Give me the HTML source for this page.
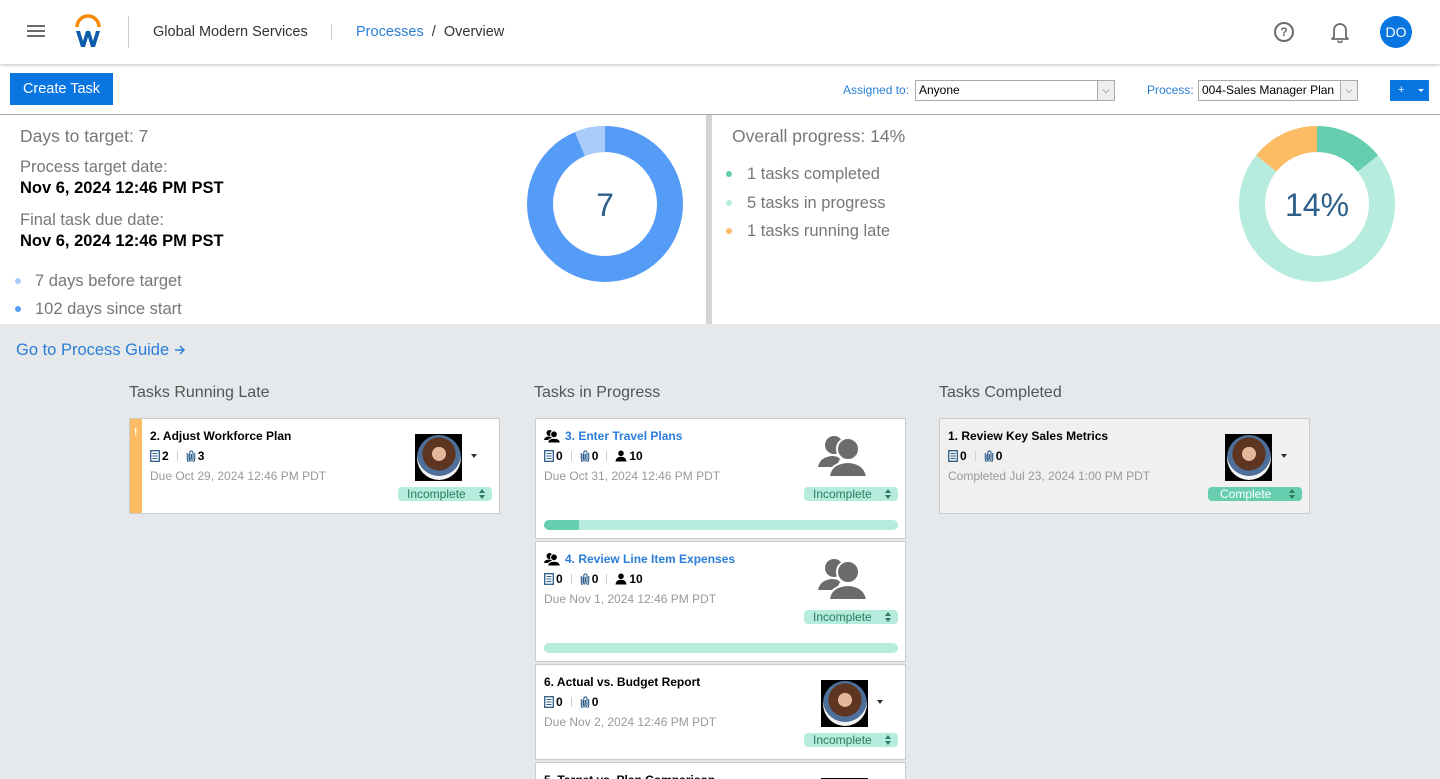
<!DOCTYPE html>
<html><head><meta charset="utf-8"><style>
*{box-sizing:border-box;margin:0;padding:0}
html{width:1440px;height:779px;overflow:hidden}
body{width:1440px;height:779px;overflow:hidden;background:#e6e9ec;font-family:"Liberation Sans",Roboto,sans-serif;position:relative;color:#333}
.abs{position:absolute}
.hdr{left:0;top:0;width:1440px;height:64px;background:#fff;box-shadow:0 1px 3px rgba(0,0,0,.25);z-index:2}
.tb{left:0;top:64px;width:1440px;height:51px;background:#fff;border-bottom:1px solid #a8a8a8}
.panel{top:115px;height:209px;background:#fff}
.card{position:absolute;background:#fff;border:1px solid #ccc;width:371px;overflow:hidden}
.card .t{position:absolute;left:14px;top:10px;font-size:12px;font-weight:bold;color:#000;display:flex;align-items:center;gap:5px}
.card .m{position:absolute;left:14px;top:30px;font-size:12px;font-weight:bold;color:#000;display:flex;align-items:center;gap:2px}
.card .d{position:absolute;left:14px;top:50px;font-size:12px;color:#999}
.sep{width:1px;height:10px;background:#ccc;margin:0 6px}
.av{position:absolute;left:285px;top:15px;width:47px;height:47px;background:#000}
.av::after{content:"";position:absolute;left:2px;top:1px;width:44px;height:45px;border-radius:50%;background:radial-gradient(circle at 50% 42%,#e2b79a 0 20%,#5d3520 21% 48%,#4d6f9a 49% 64%,#f4f4f4 65%)}
.car{position:absolute;left:341px;top:35px;width:0;height:0;border-left:3.5px solid transparent;border-right:3.5px solid transparent;border-top:4px solid #333}
.pill{position:absolute;left:268px;top:68px;width:94px;height:14px;border-radius:4px;background:#b5ecdd;color:#2d7a5f;font-size:12px;line-height:14px;padding-left:9px}
.pill::after{content:"";position:absolute;right:7px;top:2px;width:0;height:0;border-left:3.5px solid transparent;border-right:3.5px solid transparent;border-bottom:4px solid #2d7a5f}
.pill::before{content:"";position:absolute;right:7px;top:7.5px;width:0;height:0;border-left:3.5px solid transparent;border-right:3.5px solid transparent;border-top:4px solid #2d7a5f}
.bar{position:absolute;left:8px;top:101px;width:354px;height:10px;border-radius:5px;background:#b5ecdd;overflow:hidden}
.bar i{display:block;width:35px;height:10px;background:#66cdae}
.grp{position:absolute;left:282px;top:14px}
.colh{font-size:16px;color:#555;top:384px}
</style></head><body>
<svg width="0" height="0" style="position:absolute">
<defs>
<symbol id="doc" viewBox="0 0 10 12"><rect x="0.7" y="0.7" width="8.6" height="10.6" fill="none" stroke="#2c5f8a" stroke-width="1.3"/><path d="M2.5 3.5H7.5M2.5 6H7.5M2.5 8.5H7.5" stroke="#2c5f8a" stroke-width="1.1"/></symbol>
<symbol id="clip" viewBox="0 0 10 12"><path d="M3 4V9A2 2 0 0 0 7 9V2.5A1.6 1.6 0 0 0 3.8 2.5V8.5A.8.8 0 0 0 5.4 8.5V4" fill="none" stroke="#2c5f8a" stroke-width="1.1"/><path d="M1.3 3V9.2A3.7 3.7 0 0 0 8.7 9.2V3" fill="none" stroke="#2c5f8a" stroke-width="1.1"/></symbol>
<symbol id="per" viewBox="0 0 12 12"><circle cx="6" cy="3.3" r="2.8" fill="#000"/><path d="M0.5 11.5Q1 6.8 6 6.8Q11 6.8 11.5 11.5Z" fill="#000"/></symbol>
<symbol id="ppl" viewBox="0 0 16 14"><circle cx="5.5" cy="4" r="3" fill="#000"/><path d="M0 11Q0.5 7.5 5 7.5Q7 7.5 8 8.3L6 11Z" fill="#000"/><circle cx="10" cy="5.3" r="3.4" fill="#000" stroke="#fff" stroke-width="1"/><path d="M3.5 14Q4 9.3 10 9.3Q16 9.3 16.5 14Z" fill="#000" stroke="#fff" stroke-width="1"/></symbol>
</defs></svg>

<div class="abs hdr">
  <div class="abs" style="left:27px;top:25px;width:18px;height:2px;background:#6b6b6b;box-shadow:0 5px 0 #6b6b6b,0 10px 0 #6b6b6b"></div>
  <svg class="abs" style="left:74px;top:14px" width="28" height="36" viewBox="0 0 28 36">
    <path d="M3 13 A11 11 0 0 1 25 13" fill="none" stroke="#f38b00" stroke-width="3.5"/>
    <path d="M2 17 L7 33 L11 33 L14 23 L17 33 L21 33 L26 17 L22 17 L19 27 L16 17 L12 17 L9 27 L6 17 Z" fill="#0b5cad"/>
  </svg>
  <div class="abs" style="left:128px;top:16px;width:1px;height:32px;background:#ccc"></div>
  <div class="abs" style="left:153px;top:24px;font-size:14.5px;color:#333">Global Modern Services</div>
  <div class="abs" style="left:331px;top:24px;width:1px;height:16px;background:#ccc"></div>
  <div class="abs" style="left:356px;top:24px;font-size:14.5px;color:#333"><span style="color:#2a7ed8">Processes</span>&nbsp;&nbsp;/&nbsp;&nbsp;Overview</div>
  <div class="abs" style="left:1274px;top:22px;width:20px;height:20px;border:2px solid #6b6b6b;border-radius:50%;font-size:12px;font-weight:bold;color:#6b6b6b;text-align:center;line-height:16px">?</div>
  <svg class="abs" style="left:1330px;top:21px" width="20" height="22" viewBox="0 0 20 22"><path d="M4 16 V9 A6 6 0 0 1 16 9 V16 L18 18 H2 Z" fill="none" stroke="#6b6b6b" stroke-width="1.8" stroke-linejoin="round"/><path d="M8 19.5 A2 2 0 0 0 12 19.5" stroke="#6b6b6b" stroke-width="1.8" fill="none"/></svg>
  <div class="abs" style="left:1380px;top:16px;width:32px;height:32px;border-radius:50%;background:#0875e1;color:#fff;font-size:14px;text-align:center;line-height:32px">DO</div>
</div>

<div class="abs tb">
  <div class="abs" style="left:10px;top:9px;width:103px;height:32px;background:#0875e1;color:#fff;font-size:14.5px;text-align:center;line-height:32px">Create Task</div>
  <div class="abs" style="left:843px;top:19px;font-size:12px;color:#2a7ed8">Assigned to:</div>
  <div class="abs" style="left:915px;top:16px;width:200px;height:21px;border:1px solid #aaa;font-size:12px;color:#000;line-height:19px;padding-left:3px">Anyone<div class="abs" style="right:0;top:0;width:17px;height:19px;border-left:1px solid #aaa;background:#eee;font-size:9px;text-align:center;color:#444">&#9013;</div></div>
  <div class="abs" style="left:1147px;top:19px;font-size:12px;color:#2a7ed8">Process:</div>
  <div class="abs" style="left:1198px;top:16px;width:160px;height:21px;border:1px solid #aaa;font-size:12px;color:#000;line-height:19px;padding-left:3px">004-Sales Manager Plan<div class="abs" style="right:0;top:0;width:17px;height:19px;border-left:1px solid #aaa;background:#eee;font-size:9px;text-align:center;color:#444">&#9013;</div></div>
  <div class="abs" style="left:1390px;top:16px;width:39px;height:21px;background:#0875e1;color:#fff;font-size:11px;line-height:21px;padding-left:8px">+<span style="position:absolute;left:28px;top:9px;border-left:3px solid transparent;border-right:3px solid transparent;border-top:3.5px solid #fff"></span></div>
</div>

<div class="abs panel" style="left:0;width:706px">
  <div class="abs" style="left:20px;top:11px;font-size:17.5px;color:#777">Days to target: 7</div>
  <div class="abs" style="left:20px;top:43px;font-size:16.5px;color:#777">Process target date:</div>
  <div class="abs" style="left:20px;top:64px;font-size:16.5px;font-weight:bold;color:#000">Nov 6, 2024 12:46 PM PST</div>
  <div class="abs" style="left:20px;top:96px;font-size:16.5px;color:#777">Final task due date:</div>
  <div class="abs" style="left:20px;top:117px;font-size:16.5px;font-weight:bold;color:#000">Nov 6, 2024 12:46 PM PST</div>
  <div class="abs" style="left:15px;top:163px;width:6px;height:6px;border-radius:50%;background:#a9cdfb"></div>
  <div class="abs" style="left:35px;top:157px;font-size:16.5px;color:#777">7 days before target</div>
  <div class="abs" style="left:15px;top:191px;width:6px;height:6px;border-radius:50%;background:#559cf7"></div>
  <div class="abs" style="left:35px;top:185px;font-size:16.5px;color:#777">102 days since start</div>
  <svg class="abs" style="left:527px;top:11px" width="156" height="156" viewBox="0 0 156 156">
    <g transform="rotate(-90 78 78)">
      <circle cx="78" cy="78" r="65" fill="none" stroke="#559cf7" stroke-width="26"/>
      <circle cx="78" cy="78" r="65" fill="none" stroke="#a9cdfb" stroke-width="26" stroke-dasharray="0 382.4 26 100"/>
    </g>
    <text x="78" y="90" text-anchor="middle" font-size="32" fill="#2c5f8a" font-family="Liberation Sans,sans-serif">7</text>
  </svg>
</div>
<div class="abs" style="left:706px;top:115px;width:6px;height:209px;background:#d4d4d4"></div>
<div class="abs panel" style="left:712px;width:728px">
  <div class="abs" style="left:20px;top:11px;font-size:17.5px;color:#777">Overall progress: 14%</div>
  <div class="abs" style="left:14px;top:56px;width:6px;height:6px;border-radius:50%;background:#66cdae"></div>
  <div class="abs" style="left:35px;top:50px;font-size:16.5px;color:#777">1 tasks completed</div>
  <div class="abs" style="left:14px;top:85px;width:6px;height:6px;border-radius:50%;background:#b5ecdd"></div>
  <div class="abs" style="left:35px;top:79px;font-size:16.5px;color:#777">5 tasks in progress</div>
  <div class="abs" style="left:14px;top:113px;width:6px;height:6px;border-radius:50%;background:#fdbb63"></div>
  <div class="abs" style="left:35px;top:107px;font-size:16.5px;color:#777">1 tasks running late</div>
  <svg class="abs" style="left:527px;top:11px" width="156" height="156" viewBox="0 0 156 156">
    <g transform="rotate(-90 78 78)">
      <circle cx="78" cy="78" r="65" fill="none" stroke="#b5ecdd" stroke-width="26"/>
      <circle cx="78" cy="78" r="65" fill="none" stroke="#66cdae" stroke-width="26" stroke-dasharray="58.3 400"/>
      <circle cx="78" cy="78" r="65" fill="none" stroke="#fdbb63" stroke-width="26" stroke-dasharray="0 350.1 58.3 100"/>
    </g>
    <text x="78" y="90" text-anchor="middle" font-size="32" fill="#2c5f8a" font-family="Liberation Sans,sans-serif">14%</text>
  </svg>
</div>

<div class="abs" style="left:16px;top:341px;font-size:16.5px;color:#2a7ed8">Go to Process Guide <svg width="12" height="12" viewBox="0 0 12 12" style="vertical-align:-1px"><path d="M1 6H10M6 2L10 6L6 10" fill="none" stroke="#2a7ed8" stroke-width="1.4"/></svg></div>
<div class="abs colh" style="left:129px">Tasks Running Late</div>
<div class="abs colh" style="left:534px">Tasks in Progress</div>
<div class="abs colh" style="left:939px">Tasks Completed</div>

<!-- late -->
<div class="card" style="left:129px;top:418px;height:96px">
  <div class="abs" style="left:0;top:0;width:12px;height:94px;background:#fdbb63;color:#fff;font-size:10px;font-weight:bold;padding-left:4px;padding-top:8px">!</div>
  <div class="t" style="left:20px">2. Adjust Workforce Plan</div>
  <div class="m" style="left:20px"><svg width="10" height="12"><use href="#doc"/></svg>2<span class="sep"></span><svg width="10" height="12"><use href="#clip"/></svg>3</div>
  <div class="d" style="left:20px">Due Oct 29, 2024 12:46 PM PDT</div>
  <div class="av"></div><div class="car"></div><div class="pill">Incomplete</div>
</div>

<!-- progress -->
<div class="card" style="left:535px;top:418px;height:121px">
  <div class="t" style="left:8px"><svg width="16" height="14"><use href="#ppl"/></svg><span style="color:#2a7ed8">3. Enter Travel Plans</span></div>
  <div class="m" style="left:8px"><svg width="10" height="12"><use href="#doc"/></svg>0<span class="sep"></span><svg width="10" height="12"><use href="#clip"/></svg>0<span class="sep"></span><svg width="12" height="12"><use href="#per"/></svg>10</div>
  <div class="d" style="left:8px">Due Oct 31, 2024 12:46 PM PDT</div>
  <svg class="grp" width="50" height="44" viewBox="0 0 50 44"><circle cx="16" cy="12" r="9" fill="#6b6b6b"/><path d="M0 34 Q2 24 14 23 Q20 23 22 26 L18 34Z" fill="#6b6b6b"/><circle cx="30" cy="16" r="11" fill="#6b6b6b" stroke="#fff" stroke-width="2"/><path d="M11 44 Q12 30 30 29 Q47 30 49 44Z" fill="#6b6b6b" stroke="#fff" stroke-width="2"/></svg>
  <div class="pill">Incomplete</div>
  <div class="bar"><i></i></div>
</div>
<div class="card" style="left:535px;top:541px;height:121px">
  <div class="t" style="left:8px"><svg width="16" height="14"><use href="#ppl"/></svg><span style="color:#2a7ed8">4. Review Line Item Expenses</span></div>
  <div class="m" style="left:8px"><svg width="10" height="12"><use href="#doc"/></svg>0<span class="sep"></span><svg width="10" height="12"><use href="#clip"/></svg>0<span class="sep"></span><svg width="12" height="12"><use href="#per"/></svg>10</div>
  <div class="d" style="left:8px">Due Nov 1, 2024 12:46 PM PDT</div>
  <svg class="grp" width="50" height="44" viewBox="0 0 50 44"><circle cx="16" cy="12" r="9" fill="#6b6b6b"/><path d="M0 34 Q2 24 14 23 Q20 23 22 26 L18 34Z" fill="#6b6b6b"/><circle cx="30" cy="16" r="11" fill="#6b6b6b" stroke="#fff" stroke-width="2"/><path d="M11 44 Q12 30 30 29 Q47 30 49 44Z" fill="#6b6b6b" stroke="#fff" stroke-width="2"/></svg>
  <div class="pill">Incomplete</div>
  <div class="bar"><i style="width:0"></i></div>
</div>
<div class="card" style="left:535px;top:664px;height:96px">
  <div class="t" style="left:8px">6. Actual vs. Budget Report</div>
  <div class="m" style="left:8px"><svg width="10" height="12"><use href="#doc"/></svg>0<span class="sep"></span><svg width="10" height="12"><use href="#clip"/></svg>0</div>
  <div class="d" style="left:8px">Due Nov 2, 2024 12:46 PM PDT</div>
  <div class="av"></div><div class="car"></div><div class="pill">Incomplete</div>
</div>
<div class="card" style="left:535px;top:762px;height:17px;border-bottom:none">
  <div class="t" style="left:8px">5. Target vs. Plan Comparison</div>
  <div class="av" style="height:14px"></div>
</div>

<!-- completed -->
<div class="card" style="left:939px;top:418px;height:96px;background:#f0f0f0">
  <div class="t" style="left:8px">1. Review Key Sales Metrics</div>
  <div class="m" style="left:8px"><svg width="10" height="12"><use href="#doc"/></svg>0<span class="sep"></span><svg width="10" height="12"><use href="#clip"/></svg>0</div>
  <div class="d" style="left:8px">Completed Jul 23, 2024 1:00 PM PDT</div>
  <div class="av"></div><div class="car"></div><div class="pill" style="background:#66cdae;color:#fff;padding-left:12px">Complete</div>
</div>
</body></html>
